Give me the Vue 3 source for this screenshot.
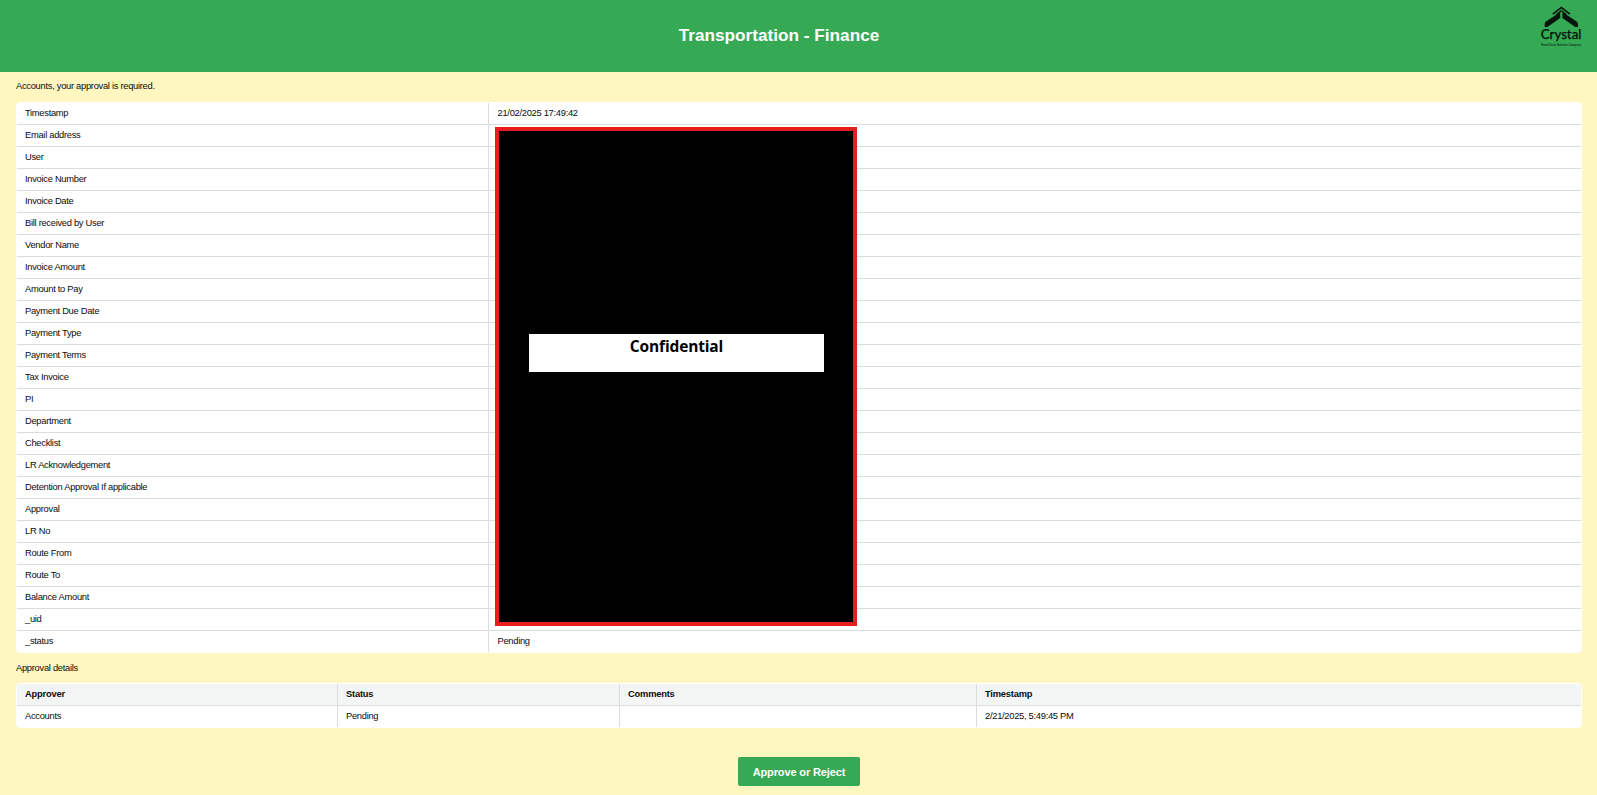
<script setup>
const rows = [
  ['Timestamp', '21/02/2025 17:49:42'],
  ...[
    'Email address', 'User', 'Invoice Number', 'Invoice Date', 'Bill received by User',
    'Vendor Name', 'Invoice Amount', 'Amount to Pay', 'Payment Due Date', 'Payment Type',
    'Payment Terms', 'Tax Invoice', 'PI', 'Department', 'Checklist', 'LR Acknowledgement',
    'Detention Approval If applicable', 'Approval', 'LR No', 'Route From', 'Route To',
    'Balance Amount', '_uid',
  ].map((label) => [label, '']),
  ['_status', 'Pending'],
]
const heads = ['Approver', 'Status', 'Comments', 'Timestamp']
const approval = ['Accounts', 'Pending', '', '2/21/2025, 5:49:45 PM']
</script>

<template>
  <div class="page">
    <header class="top">
      <h1>Transportation - Finance</h1>
      <svg class="logo" width="44" height="44" viewBox="0 0 44 44">
        <path d="M13.8 9.2 22.4 2.6 31 9.2" fill="none" stroke="#06150b" stroke-width="1.7" />
        <path d="M17.4 9.4 22.4 5.7 27.4 9.4" fill="none" stroke="#06150b" stroke-width="1.2" />
        <path d="M21.2 6.9V12.9L8.4 21.9H5.7V18.8Q5.8 17.4 7 16.5Z" fill="#06150b" />
        <path d="M23.4 6.9V12.9L36.2 21.9H38.9V18.8Q38.8 17.4 37.6 16.5Z" fill="#06150b" />
        <text class="brand" x="1.8" y="34.4" textLength="40.6" lengthAdjust="spacingAndGlyphs">Crystal</text>
        <text class="tag" x="2" y="41" textLength="40" lengthAdjust="spacingAndGlyphs">Food Chain Solution Company</text>
      </svg>
    </header>
    <main class="body">
      <p class="note">Accounts, your approval is required.</p>
      <section class="card">
        <div v-for="[label, value] in rows" :key="label" class="row details">
          <div class="cell">{{ label }}</div>
          <div class="cell">{{ value }}</div>
        </div>
        <div class="redacted">
          <div class="redacted-label">Confidential</div>
        </div>
      </section>
      <p class="note second">Approval details</p>
      <section class="card">
        <div class="row approvals head">
          <div v-for="h in heads" :key="h" class="cell">{{ h }}</div>
        </div>
        <div class="row approvals">
          <div v-for="(a, i) in approval" :key="i" class="cell">{{ a }}</div>
        </div>
      </section>
      <button class="action">Approve or Reject</button>
    </main>
  </div>
</template>

<style>
body { background: #fff7bf; overflow: hidden; }
</style>

<style scoped>
* { box-sizing: border-box; }
.page {
  height: 795px;
  background: #fff7bf;
  color: #0c0c0e;
  font: 9.33px/12px "Liberation Sans", Arial, sans-serif;
  letter-spacing: -0.28px;
}
.top {
  display: flex;
  height: 72px;
  padding: 5px 14px 0 0;
  background: #36a955;
}
h1 {
  flex: 1;
  margin: 20px 0 0 19px;
  color: #fff;
  font-size: 17.2px;
  line-height: 20px;
  letter-spacing: 0;
  text-align: center;
}
.logo { flex: none; letter-spacing: 0; }
.brand { font: 500 13px Lato, sans-serif; fill: #06150b; stroke: #06150b; stroke-width: 0.25px; }
.tag { font: 700 3px Lato, sans-serif; fill: #0b3a1b; }
.body {
  display: flex;
  flex-direction: column;
  padding: 0 15px 0 16px;
}
.note { margin: 8px 0 10px; }
.second { margin: 9px 0; }
.card {
  position: relative;
  border: 1px solid #fff;
  border-radius: 4px;
  background: #fff;
}
.row { display: grid; height: 22px; border-bottom: 1px solid #dadcde; }
.row:last-of-type, .row.details:nth-child(25) { height: 21px; border-bottom: 0; }
.details { grid-template-columns: 472px 1fr; }
.approvals { grid-template-columns: 321px 282px 357px 1fr; }
.cell { padding: 4px 8px 0; border-right: 1px solid #dadcde; white-space: pre; }
.details .cell:last-child { padding-left: 8.5px; }
.cell:last-child { border-right: 0; }
.head { background: #f4f6f6; font-weight: 700; letter-spacing: -0.2px; }
.redacted {
  position: absolute;
  left: 478px;
  top: 24px;
  width: 362px;
  height: 499px;
  padding: 203px 29px 0 30px;
  border: 4px solid #e81e1e;
  background: #000;
}
.redacted-label {
  height: 38px;
  background: #fff;
  color: #000;
  font: 700 15.5px/24px "Open Sans", "Noto Sans", sans-serif;
  letter-spacing: -0.15px;
  text-align: center;
}
.action {
  align-self: center;
  width: 122px;
  height: 29px;
  margin-top: 29px;
  padding: 1px 0 0;
  border: 0;
  border-radius: 2px;
  background: #36a955;
  color: #fff;
  font: 700 11px/28px "Liberation Sans", Arial, sans-serif;
  letter-spacing: -0.12px;
}
</style>
